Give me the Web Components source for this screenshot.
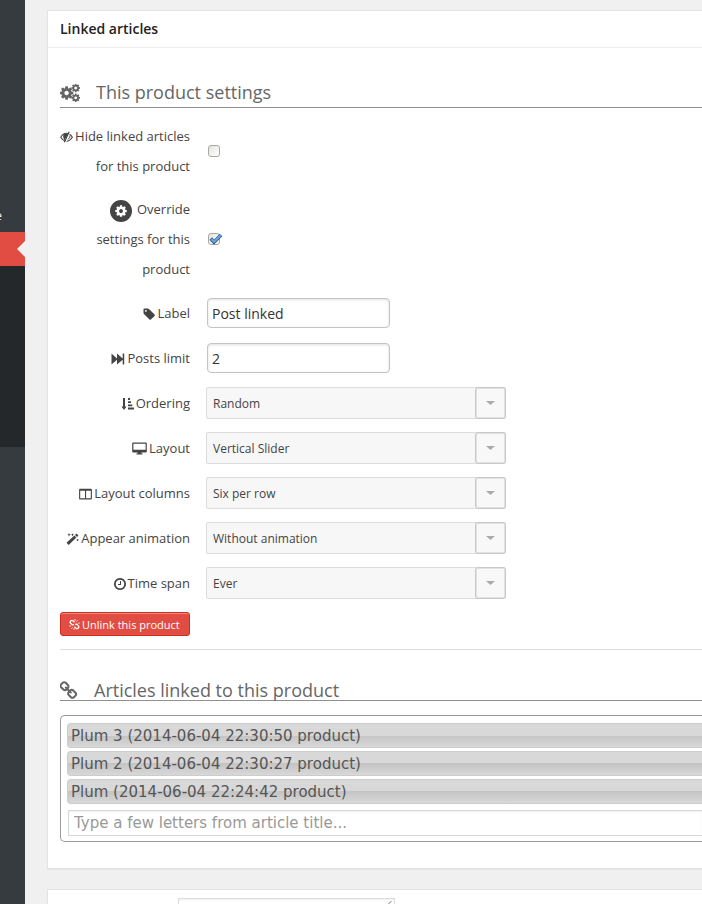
<!DOCTYPE html>
<html lang="en">
<head>
<meta charset="utf-8">
<title>Linked articles</title>
<style>
html, body { margin: 0; min-height: 100%; background: #f0f0f0; }
body { font: 13px/30px "Open Sans", sans-serif; color: #444; overflow: hidden; }
</style>
</head>
<body>
<admin-shell>
  <side-menu slot="side"></side-menu>
  <meta-panel heading="Linked articles">
    <section-title icon="cogs">This product settings</section-title>
    <settings-form></settings-form>
    <section-title icon="link" compact>Articles linked to this product</section-title>
    <article-picker></article-picker>
  </meta-panel>
  <meta-panel><option-row></option-row></meta-panel>
</admin-shell>

<script>
const COG = '<path fill-rule="evenodd" d="M1152 896q0-106-75-181t-181-75-181 75-75 181 75 181 181 75 181-75 75-181zm512-109v222q0 12-8 23t-20 13l-185 28q-19 54-39 91 35 50 107 138 10 12 10 25t-9 23q-27 37-99 108t-94 71q-12 0-26-9l-138-108q-44 23-91 38-16 136-29 186-7 28-36 28h-222q-14 0-24.5-8.5t-11.5-21.5l-28-184q-49-16-90-37l-141 107q-10 9-25 9-14 0-25-11-126-114-165-168-7-10-7-23 0-12 8-23 15-21 51-66.5t54-70.5q-27-50-41-99l-183-27q-13-2-21-12.5t-8-23.5v-222q0-12 8-23t19-13l186-28q14-46 39-92-40-57-107-138-10-12-10-24 0-10 9-23 26-36 98.5-107.5t94.5-71.5q13 0 26 10l138 107q44-23 91-38 16-136 29-186 7-28 36-28h222q14 0 24.5 8.5t11.5 21.5l28 184q49 16 90 37l142-107q9-9 24-9 13 0 25 10 129 119 165 170 7 8 7 22 0 12-8 23-15 21-51 66.5t-54 70.5q26 50 41 98l183 28q13 2 21 12.5t8 23.5z"/>';
const LINK = '<path d="M1456 1216q0-40-28-68l-208-208q-28-28-68-28-42 0-72 32 3 3 19 18.5t21.5 21.5 15 19 13 25.5 3.5 27.5q0 40-28 68t-68 28q-15 0-27.5-3.5t-25.5-13-19-15-21.5-21.5-18.5-19q-33 31-33 73 0 40 28 68l206 207q27 27 68 27 40 0 68-26l147-146q28-28 28-67zm-703-705q0-40-28-68l-206-207q-28-28-68-28-39 0-68 27l-147 146q-28 28-28 67 0 40 28 68l208 208q27 27 68 27 42 0 72-31-3-3-19-18.5t-21.5-21.5-15-19-13-25.5-3.5-27.5q0-40 28-68t68-28q15 0 27.5 3.5t25.5 13 19 15 21.5 21.5 18.5 19q33-31 33-73zm895 705q0 120-85 203l-147 146q-83 83-203 83-121 0-204-85l-206-207q-83-83-83-203 0-123 88-209l-88-88q-86 88-208 88-120 0-204-84l-208-208q-84-84-84-204t85-203l147-146q83-83 203-83 121 0 204 85l206 207q83 83 83 203 0 123-88 209l88 88q86-88 208-88 120 0 204 84l208 208q84 84 84 204z"/>';
/* name: [width, height, viewBox, markup] */
const ICONS = {
  cogs: [20, 18, '0 0 20 18', `<g transform="translate(-1.2 1.2) scale(.0087)">${COG}</g><g transform="translate(10.7 -1) scale(.0056)">${COG}</g><g transform="translate(10.7 8.8) scale(.0056)">${COG}</g>`],
  link: [18, 18, '64 0 1664 1664', LINK],
  override: [22, 22, '0 0 22 22', `<circle cx="11" cy="11" r="11"/><g fill="#fff" transform="translate(4.3 4.3) scale(.0075)">${COG}</g>`],
  eye: [13, 12, '0 0 14 12', '<path d="M.8 6.2Q3.4 2 7 2q3.7 0 6.3 4.2Q10.700 10.400 7 10.400 3.400 10.400.8 6.200z" fill="none" stroke="currentColor" stroke-width="1.200"/><path d="M3.800 2.800Q2.400 6.500 4.800 9.900L8.800 2.400z"/><path d="M10.700.6 6 11.600" stroke="#fff" stroke-width="1.200"/><path d="M9.900.3 4.700 11.600" stroke="currentColor" stroke-width="1.200"/><path d="M10.800 4.200Q11 7 8.800 8.600" fill="none" stroke="currentColor"/>'],
  tag: [12, 12, '64 64 1600 1600', '<path d="M576 448q0-53-37.5-90.5t-90.5-37.5-90.5 37.5-37.5 90.5 37.5 90.5 90.5 37.5 90.5-37.5 37.5-90.5zm1067 576q0 53-37 90l-491 492q-39 37-91 37-53 0-90-37l-715-716q-38-37-64.5-101t-26.500-117v-416q0-52 38-90t90-38h416q53 0 117 26.500t102 64.500l715 714q37 39 37 91z"/>'],
  forward: [14, 12, '0 0 14 12', '<path d="M.5.6 6 5.500V.6l5.700 4.900V.6H13.200v11h-1.500V6.700L6 11.600V6.700L.5 11.600z"/>'],
  sort: [13, 12, '0 0 13 12', '<path d="M2 0h2v8.500h1.600L3 12 .4 8.500H2zM7 0h2v1.900H7zM7 3.200h3v1.900H7zM7 6.400h4.300v1.900H7zM7 9.600h6v2H7z"/>'],
  desktop: [15, 13, '0 0 15 13', '<path fill-rule="evenodd" d="M1.200.4h12.600q1 0 1 1v8q0 1-1 1H9.400v1h1.200v1.200H4.400v-1.200h1.200v-1H1.200q-1 0-1-1v-8q0-1 1-1zm.2 1.300v6h12.200v-6z"/>'],
  columns: [13, 12, '0 0 13 12', '<path fill-rule="evenodd" d="M1 .8h11q.9 0 .9.900v8.800q0 .9-.9.900H1q-.9 0-.9-.900V1.700Q.1.800 1 .8zM1.200 2.800v7.500H6V2.800zm5.900 0v7.500h4.700V2.800z"/>'],
  magic: [13, 12, '0 0 13 12', '<path d="M8.400 2.600 10.400 4.600 2.700 12 .5 9.800z"/><path d="M10.500.5 12.500 2.500 11 4 9 2z"/><path d="M3 0l.5 1.200L4.700 1.700l-1.200.5L3 3.400l-.5-1.200-1.200-.5 1.200-.5zM6.500.2l.5 1 1 .5-1 .5-.5 1-.5-1-1-.5 1-.5zM11.600 5.500l.4 1 1 .5-1 .5-.4 1-.5-1-1-.5 1-.5z"/>'],
  clock: [12, 12, '128 128 1536 1536', '<path d="M1024 544v448q0 14-9 23t-23 9h-320q-14 0-23-9t-9-23v-64q0-14 9-23t23-9h224v-352q0-14 9-23t23-9h64q14 0 23 9t9 23zm416 352q0-148-73-273t-198-198-273-73-273 73-198 198-73 273 73 273 198 198 273 73 273-73 198-198 73-273zm224 0q0 209-103 385.500t-279.500 279.500-385.500 103-385.500-103-279.500-279.500-103-385.500 103-385.500 279.500-279.500 385.500-103 385.500 103 279.500 279.500 103 385.500z"/>'],
  unlink: [11, 11, '0 0 12 12', '<g fill="none" stroke="currentColor" stroke-width="1.500"><path d="M6 3.600 4.300 1.900Q3.200 1 2.200 2L1.600 2.600q-.8 1 .1 1.900l1.900 1.900 1.800-.3M6 8.400l1.700 1.700q1.100.9 2.100-.1l.6-.6q.8-1-.1-1.900L8.400 5.600l-1.800.3"/></g><path d="M6.500 0v2.200M9.500 1.200 8 2.800M11.800 4.500H9.500M5.500 12V9.800M2.500 10.800 4 9.200M.2 7.600h2.300" stroke="currentColor" stroke-width=".8"/>']
};

const define = (name, render) => customElements.define(name, class extends HTMLElement {
  connectedCallback() {
    if (this.shadowRoot) return;
    const template = document.createElement('template');
    template.innerHTML = render(this);
    this.attachShadow({ mode: 'open' }).append(template.content.cloneNode(true));
  }
});

define('fa-icon', el => {
  const [w, h, box, art] = ICONS[el.getAttribute('name')];
  return `<style>:host{display:inline-block;vertical-align:middle;line-height:0}svg{display:block;fill:currentColor}</style>
  <svg width="${w}" height="${h}" viewBox="${box}" aria-hidden="true">${art}</svg>`;
});

define('admin-shell', () => `<style>
  :host{display:grid;grid-template-columns:25px minmax(0,1fr);height:100vh;overflow:hidden}
  main{display:flex;flex-direction:column;gap:20px;padding:10px 0 0 22px}
  </style><slot name="side"></slot><main><slot></slot></main>`);

define('side-menu', () => `<style>
  :host{display:block;background:#363b3f;overflow:hidden}
  nav{display:flex;flex-direction:column;padding-top:198px}
  a{display:flex;justify-content:flex-end;height:34px;line-height:34px;padding-right:23px;box-sizing:border-box;color:#f1ebe3;text-decoration:none}
  .current{background:#e14d43;padding:0;align-items:center}
  .current::after{content:"";border:8px solid transparent;border-left-width:0;border-right-color:#f0f0f0}
  .sub{height:181px;background:#25282b}
  </style><nav aria-label="Admin"><a href="#">e</a><a class="current" href="#" aria-label="Current section"></a><div class="sub"></div></nav>`);

define('meta-panel', el => `<style>
  :host{display:block;flex:none;background:#fff;border:1px solid #e3e3e3;border-right:0;box-shadow:0 1px 1px rgba(0,0,0,.04)}
  h2{margin:0;padding:0 12px;border-bottom:1px solid #eee;font-size:14px;line-height:36px;font-weight:600;color:#222}
  .body{padding-left:12px}
  :host([heading]) .body{padding-bottom:26px}
  </style>${el.hasAttribute('heading') ? `<h2>${el.getAttribute('heading')}</h2>` : ''}<div class="body"><slot></slot></div>`);

define('section-title', el => `<style>
  :host{display:block;padding-top:32px}
  :host([compact]){padding-top:30px}
  h3{display:flex;align-items:center;gap:16px;margin:0;padding-bottom:2px;border-bottom:1px solid #909090;font-size:18px;line-height:25px;font-weight:400;color:#666}
  :host([compact]) h3{padding-bottom:0;line-height:20px}
  </style><h3><fa-icon name="${el.getAttribute('icon')}"></fa-icon><span><slot></slot></span></h3>`);

define('form-row', el => `<style>
  :host{display:grid;grid-template-columns:130px minmax(0,1fr);column-gap:16px;align-items:center;min-height:32px}
  label{text-align:right}
  fa-icon{margin:0 2px 2px 0}
  fa-icon[name=override]{margin:-4px 5px -4px 0}
  input[type=text]{display:block;width:183px;height:30px;box-sizing:border-box;margin:0 0 0 1px;padding:0 4px;border:1px solid #c4c4c4;border-radius:4px;box-shadow:inset 0 1px 3px rgba(0,0,0,.12);font:14px "Open Sans",sans-serif;color:#333;background:#fff}
  .pick,.tick{display:grid;width:max-content;align-items:center}
  .pick>*,.tick>*{grid-area:1/1}
  select{appearance:none;width:300px;height:32px;margin:0;padding:0 36px 0 6px;border:1px solid #dcdcdc;border-radius:2px;background:#f7f7f7;font:12px "Open Sans",sans-serif;color:#444}
  .arrow{justify-self:end;display:grid;place-items:center;box-sizing:border-box;width:31px;height:32px;border:1px solid #c8c8c8;border-radius:3px;box-shadow:inset 0 0 0 1px #e2e2e2;pointer-events:none;background:#f8f8f8}
  .tick{margin-left:2px}
  input[type=checkbox]{appearance:none;width:12px;height:12px;margin:0;border:1px solid #aaa9a0;border-radius:3px;background:linear-gradient(135deg,#e4e4e2,#fff)}
  .tick svg{pointer-events:none;visibility:hidden}
  input:checked+svg{visibility:visible}
  </style><label for="f"><fa-icon name="${el.getAttribute('icon')}"></fa-icon>${el.getAttribute('label')}</label>${field(el)}`);

function field(el) {
  const value = el.getAttribute('value');
  switch (el.getAttribute('type')) {
    case 'text': return `<input id="f" type="text" value="${value}">`;
    case 'select': return `<div class="pick"><select id="f"><option>${value}</option></select><span class="arrow"><svg width="9" height="4" fill="#aaa"><path d="M0 0h9L4.500 4z"/></svg></span></div>`;
    default: return `<div class="tick"><input id="f" type="checkbox"${value ? ' checked' : ''}><svg width="15" height="12" viewBox="0 0 15 12"><path d="M2.800 5.500 6 9.200 13 2" fill="none" stroke="#315b8c" stroke-width="3.600"/><path d="M3.300 6 6 8.800 12.700 2.300" fill="none" stroke="#6aa5e0" stroke-width="2"/></svg></div>`;
  }
}

define('settings-form', () => `<style>
  form{display:flex;flex-direction:column;gap:13px;padding:13px 0;border-bottom:1px solid #ddd}
  button{align-self:flex-start;display:flex;align-items:center;gap:2px;height:24px;padding:0 9px 0 8px;border:1px solid #d02a21;border-radius:3px;background:#e14d43;box-shadow:inset 0 1px 0 #ec8a85;color:#fff;font:11px "Open Sans",sans-serif}
  </style><form>
  <form-row type="checkbox" icon="eye" label="Hide linked articles for this product"></form-row>
  <form-row type="checkbox" icon="override" label="Override settings for this product" value="on"></form-row>
  <form-row type="text" icon="tag" label="Label" value="Post linked"></form-row>
  <form-row type="text" icon="forward" label="Posts limit" value="2"></form-row>
  <form-row type="select" icon="sort" label="Ordering" value="Random"></form-row>
  <form-row type="select" icon="desktop" label="Layout" value="Vertical Slider"></form-row>
  <form-row type="select" icon="columns" label="Layout columns" value="Six per row"></form-row>
  <form-row type="select" icon="magic" label="Appear animation" value="Without animation"></form-row>
  <form-row type="select" icon="clock" label="Time span" value="Ever"></form-row>
  <button type="button"><fa-icon name="unlink"></fa-icon>Unlink this product</button>
  </form>`);

define('article-picker', () => `<style>
  :host{display:block;margin-top:14px;padding:7px 0 5px 6px;border:1px solid #999;border-right:0;border-radius:5px 0 0 5px;font-family:"DejaVu Sans",sans-serif;font-size:15px}
  ul{display:flex;flex-direction:column;gap:3px;margin:0;padding:0;list-style:none}
  li{box-sizing:border-box;height:25px;line-height:25px;padding-left:3px;border:1px solid #ccc;border-right:0;border-radius:4px 0 0 4px;background:linear-gradient(#d8d8d8 50%,#c4c4c4 50%,#d8d8d8);color:#555}
  input{display:block;box-sizing:border-box;width:calc(100% - 1px);height:26px;margin:6px 0 0 1px;padding:0 5px;border:1px solid #d8d8d8;border-right:0;background:#fff;box-shadow:inset 0 1px 2px rgba(0,0,0,.07);font:inherit}
  input::placeholder{color:#999;opacity:1}
  </style><ul><li>Plum 3 (2014-06-04 22:30:50 product)</li><li>Plum 2 (2014-06-04 22:30:27 product)</li><li>Plum (2014-06-04 22:24:42 product)</li></ul>
  <input type="text" aria-label="Article title" placeholder="Type a few letters from article title...">`);

define('option-row', () => `<style>
  :host{display:block;padding:8px 0 8px 118px}
  .pick{display:grid;width:max-content}
  .pick>*{grid-area:1/1}
  select{appearance:none;width:217px;height:28px;margin:0;border:1px solid #ddd;background:#fff;box-shadow:inset 0 1px 2px rgba(0,0,0,.07)}
  svg{justify-self:end;margin:3px 3px 0 0;pointer-events:none}
  </style><div class="pick"><select aria-label="Option"></select><svg width="8" height="8" stroke="#777"><path d="M7.500 0 0 7.500M7.500 4 4 7.500"/></svg></div>`);
</script>
</body>
</html>
